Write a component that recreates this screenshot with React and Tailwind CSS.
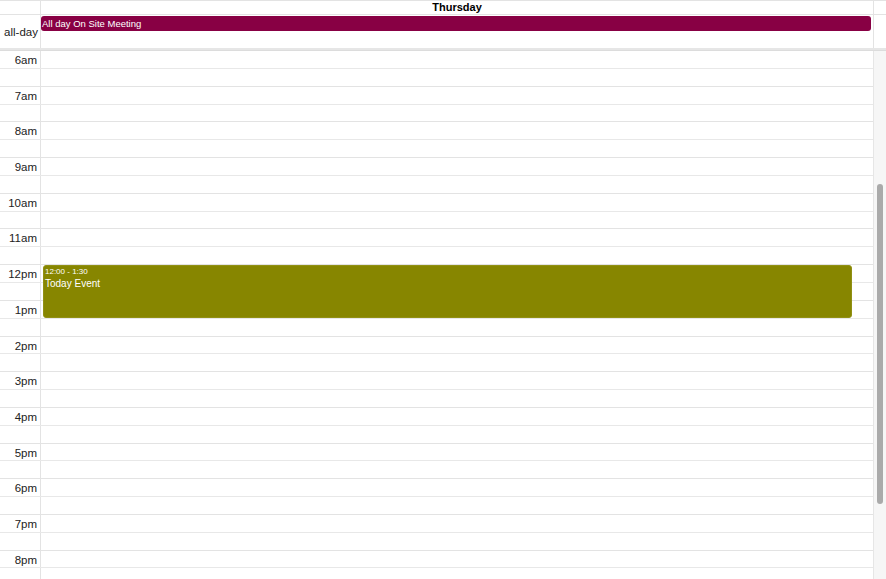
const hours = ["6am", "7am", "8am", "9am", "10am", "11am", "12pm", "1pm", "2pm", "3pm", "4pm", "5pm", "6pm", "7pm", "8pm"];

function HourRow({ label }) {
  return (
    <>
      <div className="flex h-[17.857px] border-b border-[#e8e8e8] box-border">
        <div className="w-[41px] border-r border-[#e3e3e3] text-right pr-[3px] pt-[1px] text-[11.5px] leading-[17px] text-[#222]">
          {label}
        </div>
        <div className="flex-1" />
      </div>
      <div className="flex h-[17.857px] border-b border-[#e3e3e3] box-border">
        <div className="w-[41px] border-r border-[#e3e3e3]" />
        <div className="flex-1" />
      </div>
    </>
  );
}

export default function App() {
  return (
    <div className="w-[886px] h-[579px] overflow-hidden bg-white text-black font-['Liberation_Sans',Arial,sans-serif]">
      {/* day header */}
      <div className="flex h-[15px] border-t border-b border-[#e3e3e3] box-border">
        <div className="w-[41px] border-r border-[#e3e3e3]" />
        <div className="flex-1 text-center font-bold text-[11px] leading-[13px]">Thursday</div>
        <div className="w-[13px] border-l border-[#e3e3e3]" />
      </div>

      {/* all-day */}
      <div className="flex h-[33px]">
        <div className="w-[41px] border-r border-[#e3e3e3] flex items-center justify-end pr-[2px] pt-[2px] text-[11.5px] text-[#222]">
          all-day
        </div>
        <div className="flex-1 pt-[1px] pr-[2px]">
          <div className="h-[15px] rounded-[3px] bg-[#880044] text-white text-[9.5px] leading-[15px] pl-[1px]">
            All day On Site Meeting
          </div>
        </div>
        <div className="w-[13px] border-l border-[#e3e3e3]" />
      </div>

      <div className="h-[3px] bg-[#e6e6e6] border-b border-[#dcdcdc]" />

      {/* time grid */}
      <div className="flex h-[528px]">
        <div className="relative w-[873px] overflow-hidden">
          {hours.map((h) => (
            <HourRow key={h} label={h} />
          ))}
          <div className="absolute left-[43px] top-[214px] w-[809px] h-[53px] rounded-[3px] bg-[#878600] border border-[#919014] text-white pl-[1px]">
            <div className="text-[8px] leading-[10px] mt-[1px]">12:00 - 1:30</div>
            <div className="text-[10px] leading-[12px] mt-[1px]">Today Event</div>
          </div>
        </div>
        <div className="w-[13px] bg-[#f6f6f6] border-l border-[#e6e6e6] flex justify-center">
          <div className="mt-[133px] w-[6px] h-[320px] rounded-full bg-[#aaaaaa]" />
        </div>
      </div>
    </div>
  );
}
